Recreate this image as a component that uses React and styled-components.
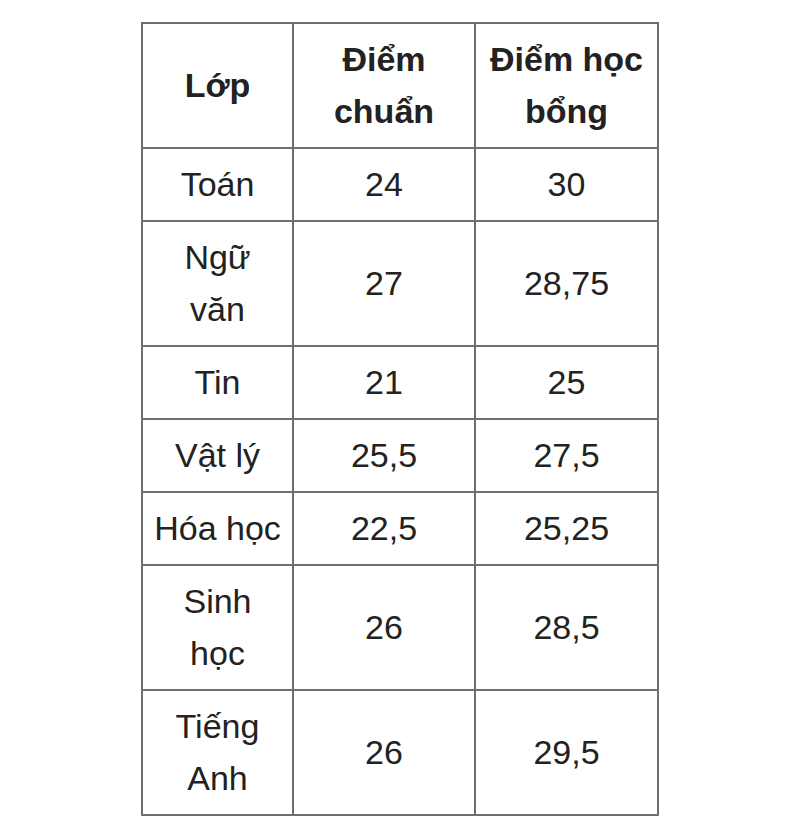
import * as React from "react";
import styled, { createGlobalStyle } from "styled-components";

const rows = [
    { lop: ["Toán"], chuan: "24", hocBong: "30" },
    { lop: ["Ngữ", "văn"], chuan: "27", hocBong: "28,75" },
    { lop: ["Tin"], chuan: "21", hocBong: "25" },
    { lop: ["Vật lý"], chuan: "25,5", hocBong: "27,5" },
    { lop: ["Hóa học"], chuan: "22,5", hocBong: "25,25" },
    { lop: ["Sinh", "học"], chuan: "26", hocBong: "28,5" },
    { lop: ["Tiếng", "Anh"], chuan: "26", hocBong: "29,5" },
];

function Lines({ parts }) {
    return parts.map((p, i) => (
        <React.Fragment key={i}>
            {i > 0 && <br />}
            {p}
        </React.Fragment>
    ));
}

export default function App() {
    return (
        <Page>
            <GlobalStyle />
            <ScoreTable>
                <colgroup>
                    <col style={{ width: "151px" }} />
                    <col style={{ width: "182px" }} />
                    <col style={{ width: "183px" }} />
                </colgroup>
                <thead>
                    <tr>
                        <HeadCell>Lớp</HeadCell>
                        <HeadCell>Điểm<br />chuẩn</HeadCell>
                        <HeadCell>Điểm học<br />bổng</HeadCell>
                    </tr>
                </thead>
                <tbody>
                    {rows.map((r) => (
                        <tr key={r.lop.join(" ")}>
                            <Cell><Lines parts={r.lop} /></Cell>
                            <Cell>{r.chuan}</Cell>
                            <Cell>{r.hocBong}</Cell>
                        </tr>
                    ))}
                </tbody>
            </ScoreTable>
        </Page>
    );
}

const GlobalStyle = createGlobalStyle`
    html, body {
        margin: 0;
        padding: 0;
        background: #fff;
    }
`;

const Page = styled.div`
    width: 800px;
    min-height: 828px;
    padding-top: 22px;
    box-sizing: border-box;
    font-family: "Liberation Sans", Arial, sans-serif;
    color: #222;
`;

const ScoreTable = styled.table`
    margin: 0 auto;
    width: 518px;
    border-collapse: collapse;
    table-layout: fixed;
    border: 2px solid #6e6e6e;
`;

const Cell = styled.td`
    border: 2px solid #6e6e6e;
    padding: 9px 8px 10px;
    font-size: 34px;
    line-height: 52px;
    text-align: center;
    vertical-align: middle;
`;

const HeadCell = styled(Cell).attrs({ as: "th" })`
    font-weight: bold;
`;
